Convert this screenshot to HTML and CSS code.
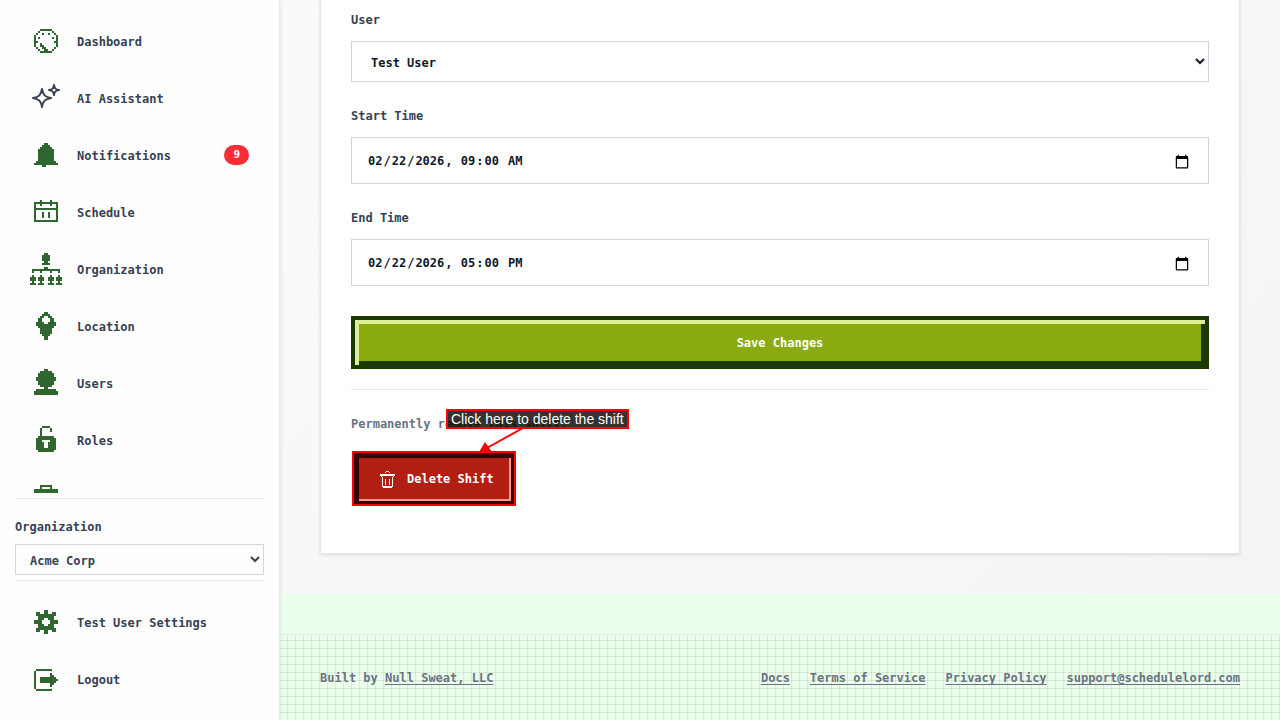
FILE: index.html
```
<!DOCTYPE html>
<html lang="en">
<head>
    <meta charset="UTF-8">
    <meta name="viewport" content="width=device-width, initial-scale=1.0">
    <title>Edit Shift</title>
    <link rel="stylesheet" href="styles.css">
</head>
<body>
    <div class="app">
        <aside class="sidebar">
            <nav class="nav nav-main">
                <a class="nav-link" href="#">
                    <svg class="icon" viewBox="0 0 16 16"><path d="M5 2.5h6M4 3.5h1M11 3.5h1M3 4.5h1M6 4.5h1M9 4.5h1M12 4.5h1M2 5.5h1M13 5.5h1M2 6.5h1M4 6.5h1M11 6.5h1M13 6.5h1M2 7.5h1M13 7.5h1M2 8.5h2M12 8.5h2M2 9.5h1M5 9.5h1M13 9.5h1M2 10.5h1M5 10.5h2M13 10.5h1M3 11.5h1M6 11.5h2M12 11.5h1M4 12.5h1M7 12.5h2M11 12.5h1M5 13.5h6"/></svg>
                    <span>Dashboard</span>
                </a>
                <a class="nav-link" href="#">
                    <svg class="icon-sparkle" viewBox="0 0 32 32"><path d="M12 7C13 13 15 15 21 16C15 17 13 19 12 25C11 19 9 17 3 16C9 15 11 13 12 7Z"/><path d="M24 3C24.500 6.500 25.500 7.500 29 8C25.500 8.500 24.500 9.500 24 13C23.500 9.500 22.500 8.500 19 8C22.500 7.500 23.500 6.500 24 3Z"/></svg>
                    <span>AI Assistant</span>
                </a>
                <a class="nav-link" href="#">
                    <svg class="icon" viewBox="0 0 16 16"><path d="M7 2.5h2M6 3.5h4M5 4.5h6M4 5.5h8M4 6.5h8M4 7.5h8M4 8.5h8M4 9.5h8M4 10.5h8M3 11.5h10M2 12.5h12M6 13.5h2"/></svg>
                    <span>Notifications</span>
                    <span class="badge">9</span>
                </a>
                <a class="nav-link" href="#">
                    <svg class="icon" viewBox="0 0 16 16"><path d="M5 2.5h1M10 2.500h1M2 3.5h12M2 4.5h1M5 4.5h1M10 4.5h1M13 4.5h1M2 5.5h1M13 5.5h1M2 6.5h12M2 7.5h1M13 7.5h1M2 8.5h1M6 8.5h1M9 8.5h1M13 8.5h1M2 9.5h1M6 9.5h1M9 9.5h1M13 9.5h1M2 10.5h1M6 10.5h1M9 10.5h1M13 10.5h1M2 11.5h1M13 11.5h1M2 12.5h12"/></svg>
                    <span>Schedule</span>
                </a>
                <a class="nav-link" href="#">
                    <svg class="icon" viewBox="0 0 16 16"><path d="M7 .5h2M6 1.5h4M6 2.5h4M6 3.5h4M7 4.5h2M6 5.5h4M7 7.5h2M1 8.5h14M1 9.5h1M5 9.5h1M10 9.5h1M14 9.5h1M1 11.5h1M5 11.5h1M10 11.5h1M14 11.5h1M0 12.5h3M4 12.5h3M9 12.5h3M13 12.5h3M0 13.5h3M4 13.5h3M9 13.5h3M13 13.5h3M1 14.5h1M5 14.5h1M10 14.5h1M14 14.5h1M0 15.5h3M4 15.5h3M9 15.5h3M13 15.5h3"/></svg>
                    <span>Organization</span>
                </a>
                <a class="nav-link" href="#">
                    <svg class="icon" viewBox="0 0 16 16"><path d="M7 1.5h2M6 2.5h4M5 3.5h2M9 3.5h2M4 4.5h2M10 4.5h2M4 5.5h2M10 5.5h2M3 6.5h4M9 6.5h4M3 7.5h10M4 8.5h8M5 9.5h6M5 10.5h6M5 11.5h6M6 12.5h4M7 13.5h2M7 14.5h2"/></svg>
                    <span>Location</span>
                </a>
                <a class="nav-link" href="#">
                    <svg class="icon" viewBox="0 0 16 16"><path d="M7 1.5h2M5 2.5h6M4 3.5h8M4 4.5h8M3 5.5h10M3 6.5h10M4 7.5h8M4 8.5h8M5 9.5h6M7 10.5h2M3 11.5h10M2 12.5h12M2 13.5h12"/></svg>
                    <span>Users</span>
                </a>
                <a class="nav-link" href="#">
                    <svg class="icon" viewBox="0 0 16 16"><path d="M6 1.5h4M5 2.5h1M10 2.5h1M5 3.5h1M10 3.5h1M5 4.5h1M5 5.5h1M4 6.5h8M3 7.5h10M3 8.5h3M10 8.5h3M3 9.5h4M9 9.5h4M3 10.5h4M9 10.5h4M3 11.5h4M9 11.5h4M3 12.5h10M4 13.5h8"/></svg>
                    <span>Roles</span>
                </a>
                <a class="nav-link" href="#" aria-label="Positions">
                    <svg class="icon" viewBox="0 0 16 16"><path d="M5 2.5h6M5 3.5h1M10 3.5h1M2 4.5h12M2 5.5h12M2 6.5h12M2 7.5h12M2 8.5h12M2 9.5h12M2 10.5h12M2 11.5h12"/></svg>
                </a>
            </nav>

            <div class="org-picker">
                <label for="organization">Organization</label>
                <select id="organization" class="org-select">
                    <option>Acme Corp</option>
                </select>
            </div>

            <nav class="nav nav-account">
                <a class="nav-link" href="#">
                    <svg class="icon" viewBox="0 0 16 16"><path d="M7 2.5h2M3 3.5h2M7 3.5h2M11 3.5h2M3 4.5h10M4 5.5h8M4 6.5h3M9 6.5h3M2 7.5h4M10 7.5h4M2 8.5h4M10 8.5h4M4 9.5h3M9 9.5h3M4 10.5h8M3 11.5h10M3 12.5h2M7 12.5h2M11 12.5h2M7 13.5h2"/></svg>
                    <span>Test User Settings</span>
                </a>
                <a class="nav-link" href="#">
                    <svg class="icon" viewBox="0 0 16 16"><path d="M3 3.5h8M2 4.5h1M2 5.5h1M10 5.5h1M2 6.5h1M10 6.5h2M2 7.5h1M5 7.5h8M2 8.5h1M5 8.5h9M2 9.5h1M5 9.5h8M2 10.5h1M10 10.5h2M2 11.5h1M10 11.5h1M2 12.5h1M3 13.5h8"/></svg>
                    <span>Logout</span>
                </a>
            </nav>
        </aside>

        <div class="page">
            <main class="content">
                <div class="card">
                    <form class="shift-form">
                        <div class="field">
                            <label for="user">User</label>
                            <select id="user" class="control">
                                <option>Test User</option>
                            </select>
                        </div>
                        <div class="field">
                            <label for="start">Start Time</label>
                            <input id="start" class="control control-date" type="datetime-local" value="2026-02-22T09:00">
                        </div>
                        <div class="field">
                            <label for="end">End Time</label>
                            <input id="end" class="control control-date" type="datetime-local" value="2026-02-22T17:00">
                        </div>
                        <button class="btn btn-save" type="button">Save Changes</button>
                    </form>

                    <section class="danger">
                        <p>Permanently remove this shift.</p>
                        <button class="btn btn-delete" type="button">
                            <svg class="icon-trash" viewBox="0 0 16 18"><path d="M6 .5h3M5 1.5h1M9 1.500h1M0 3.5h15M0 4.5h15M1 5.5h1M13 5.5h1M2 6.5h1M12 6.5h1M2 7.5h1M12 7.5h1M2 8.5h1M5 8.5h1M9 8.5h1M12 8.5h1M2 9.5h1M5 9.5h1M9 9.5h1M12 9.5h1M2 10.5h1M5 10.5h1M9 10.5h1M12 10.5h1M2 11.5h1M5 11.5h1M9 11.5h1M12 11.5h1M2 12.5h1M5 12.5h1M9 12.5h1M12 12.5h1M2 13.5h1M5 13.5h1M9 13.5h1M12 13.5h1M2 14.5h1M12 14.5h1M2 15.5h11M3 16.5h9"/></svg>
                            <span>Delete Shift</span>
                        </button>
                        <!-- walkthrough callout -->
                        <div class="callout">Click here to delete the shift</div>
                        <svg class="callout-arrow" viewBox="0 0 50 26"><path d="M46 0L10 20" stroke="#f00" stroke-width="2"/><path d="M2 24L8 14L15 24Z" fill="#f00"/></svg>
                    </section>
                </div>
            </main>

            <footer class="footer">
                <div>Built by <a href="#">Null Sweat, LLC</a></div>
                <div class="footer-links">
                    <a href="#">Docs</a>
                    <a href="#">Terms of Service</a>
                    <a href="#">Privacy Policy</a>
                    <a href="#">support@schedulelord.com</a>
                </div>
            </footer>
        </div>
    </div>
</body>
</html>
```
FILE: styles.css
```
* {
    box-sizing: border-box;
}
body {
    margin: 0;
    background: #ecffec;
    color: #364153;
    font-family: "DejaVu Sans Mono", monospace;
    font-size: 12px;
    font-weight: bold;
    line-height: 21px;
}
button, input, select {
    font: inherit;
}
.app {
    display: flex;
    height: 100vh;
    overflow: hidden;
}

/* Sidebar */
.sidebar {
    flex: none;
    display: flex;
    flex-direction: column;
    width: 280px;
    padding: 15px;
    background: #fefefe;
    border-right: 1px solid #e5e7eb;
    box-shadow: 1px 0 4px rgba(0, 0, 0, 0.08);
    z-index: 1;
}
.nav {
    display: flex;
    flex-direction: column;
    gap: 5px;
}
.nav-main {
    flex: 1;
    min-height: 0;
    margin-bottom: 5px;
    overflow: hidden;
}
.nav-account {
    padding-top: 15px;
}
.nav-link {
    flex: none;
    display: flex;
    align-items: center;
    gap: 15px;
    padding: 10px 15px;
    color: #364153;
    line-height: 24px;
    text-decoration: none;
}
.nav-link span:not(.badge) {
    padding-top: 2px;
}
.icon, .icon-sparkle {
    flex: none;
    width: 32px;
    height: 32px;
    fill: none;
}
.icon {
    stroke: #306630;
    shape-rendering: crispEdges;
}
.icon-sparkle {
    stroke: #364153;
    stroke-width: 2;
    stroke-linejoin: round;
}
.badge {
    margin-left: auto;
    padding: 0 9px;
    border-radius: 10px;
    background: #fb2c36;
    color: #fff;
    font-size: 11px;
    line-height: 20px;
}
.org-picker {
    display: flex;
    flex-direction: column;
    gap: 6px;
    padding: 18px 0 5px;
    border-top: 1px solid #e5e7eb;
    border-bottom: 1px solid #e5e7eb;
}
.org-select {
    width: 100%;
    height: 31px;
    padding: 2px 0 0 10px;
    border: 1px solid #d1d5dc;
    border-radius: 0;
    background: #fefefe;
    color: #364153;
}

/* Shift form */
.page {
    flex: 1;
    min-width: 0;
    display: flex;
    flex-direction: column;
}
.content {
    padding: 0 40px 40px;
    background: linear-gradient(135deg, #f9fafb, #f3f4f6);
}
.card {
    padding: 10px 30px 48px;
    border: 1px solid #e5e7eb;
    border-top: 0;
    background: #fff;
    box-shadow: 0 1px 3px rgba(0, 0, 0, 0.12);
}
.shift-form {
    display: flex;
    flex-direction: column;
    gap: 24px;
}
.field {
    display: flex;
    flex-direction: column;
    gap: 10px;
}
.control {
    width: 100%;
    height: 41px;
    padding: 2px 0 0 15px;
    border: 1px solid #d1d5dc;
    border-radius: 0;
    background: #fff;
    color: #101828;
}
.control-date {
    height: 47px;
    padding: 2px 16px 0 15px;
}
.control-date::-webkit-calendar-picker-indicator {
    font-size: 16px;
}
.btn {
    color: #fff;
    cursor: pointer;
}
.btn-save {
    height: 53px;
    margin-top: 6px;
    padding-top: 2px;
    border: 4px solid #1c3a00;
    background: #8aab0f;
    box-shadow: inset 4px 4px 0 #dcee9a, inset -4px -4px 0 #1c3a00;
}
.danger {
    position: relative;
    margin-top: 20px;
    padding-top: 24px;
    border-top: 1px solid #e5e7eb;
    color: #6a7282;
}
.danger p {
    margin: 0 0 17px;
}
.btn-delete {
    display: flex;
    align-items: center;
    gap: 11px;
    height: 53px;
    margin: 0 2px;
    padding: 2px 17px 0 23px;
    border: 4px solid #360300;
    background: #b01f12;
    box-shadow: inset 2px 2px 0 #360300, inset -2px -2px 0 #f49a8e;
    outline: 2px solid #f00;
    outline-offset: -1px;
}
.icon-trash {
    flex: none;
    width: 16px;
    height: 18px;
    stroke: #fff;
    fill: none;
    shape-rendering: crispEdges;
}
.callout {
    position: absolute;
    top: 19px;
    left: 95px;
    padding: 0 3px;
    border: 2px solid #f00;
    background: rgba(0, 0, 0, 0.8);
    color: #fff;
    font: 14px/16px "Liberation Sans", Arial, sans-serif;
    white-space: nowrap;
}
.callout-arrow {
    position: absolute;
    top: 38px;
    left: 126px;
    width: 50px;
    height: 26px;
}

/* Footer */
.footer {
    flex: 1;
    display: flex;
    align-items: flex-start;
    justify-content: space-between;
    margin-top: 40px;
    padding: 33px 40px;
    border-top: 1px solid #e5e7eb;
    background-color: #ecffec;
    background-image:
        linear-gradient(to right, transparent 7px, rgba(48, 102, 48, 0.12) 7px),
        linear-gradient(to bottom, transparent 7px, rgba(48, 102, 48, 0.12) 7px);
    background-position: 0 -2px;
    background-size: 8px 8px;
    color: #6a7282;
}
.footer a {
    color: #6a7282;
    text-underline-offset: 2px;
}
.footer-links {
    display: flex;
    gap: 20px;
}
```
